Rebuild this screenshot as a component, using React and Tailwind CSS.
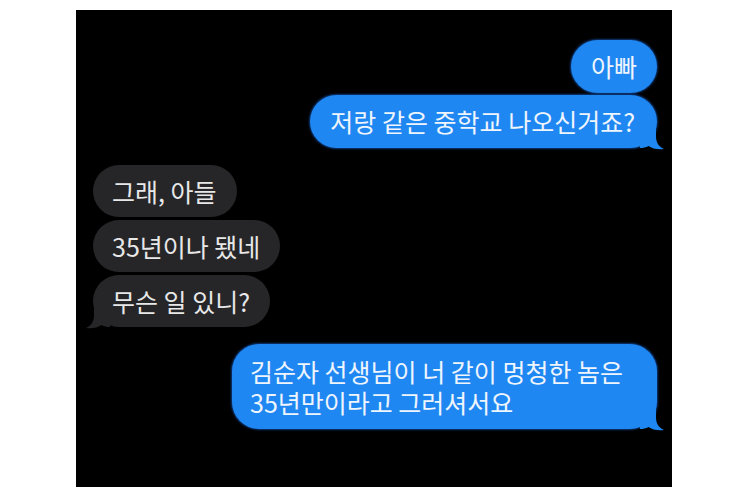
const FONT = { fontFamily: '"Noto Sans CJK KR", "Noto Sans", sans-serif' };

function Tail({ color, side = 'right' }) {
  const pos = side === 'right' ? 'right-[-7px] bottom-[-2px]' : 'left-[-7px] bottom-[-2px] -scale-x-100';
  return (
    <svg className={`absolute ${pos}`} width="24" height="26" viewBox="0 0 24 26">
      <path
        d="M0 0 L16 0 L16 12 C16 18.5 18.5 22.5 24 25 C18 26 12 24.5 8.5 22 C6 23.5 3 24 0 24 Z"
        fill={color}
      />
    </svg>
  );
}

function Sent({ children, tail, className = '' }) {
  return (
    <div
      className={`relative bg-[#1f87f1] text-[#eef5fd] text-[25px] leading-[31px] rounded-[27px] shadow-[0_0_2px_1px_#0e3a7c] ${className}`}
    >
      {tail && <Tail color="#1f87f1" />}
      <div className="relative z-10">{children}</div>
    </div>
  );
}

function Received({ children, tail }) {
  return (
    <div className="relative bg-[#262628] text-[#e8e8e8] text-[25px] leading-[31px] rounded-full h-[52px] flex items-center pl-[19px] pr-[20px]">
      {tail && <Tail color="#262628" side="left" />}
      <div className="relative z-10">{children}</div>
    </div>
  );
}

export default function App() {
  return (
    <div className="min-h-screen bg-white pt-[10px]" style={FONT}>
      <div className="ml-[76px] w-[596px] h-[477px] bg-black flex flex-col pt-[30px] pl-[17px] pr-[15px]">
        {/* 내가 보낸 메시지 */}
        <div className="flex flex-col items-end gap-[2px]">
          <Sent className="h-[53px] flex items-center px-[20px]">아빠</Sent>
          <Sent tail className="h-[53px] flex items-center pl-[20px] pr-[22px]">
            저랑 같은 중학교 나오신거죠?
          </Sent>
        </div>

        {/* 아빠 답장 */}
        <div className="mt-[17px] flex flex-col items-start gap-[3px]">
          <Received>그래, 아들</Received>
          <Received>35년이나 됐네</Received>
          <Received tail>무슨 일 있니?</Received>
        </div>

        <div className="mt-[17px] flex justify-end">
          <Sent tail className="w-[425px] h-[85px] flex items-center pl-[18px] pr-[14px]">
            <div>김순자 선생님이 너 같이 멍청한 놈은</div>
            <div>35년만이라고 그러셔서요</div>
          </Sent>
        </div>
      </div>
    </div>
  );
}
